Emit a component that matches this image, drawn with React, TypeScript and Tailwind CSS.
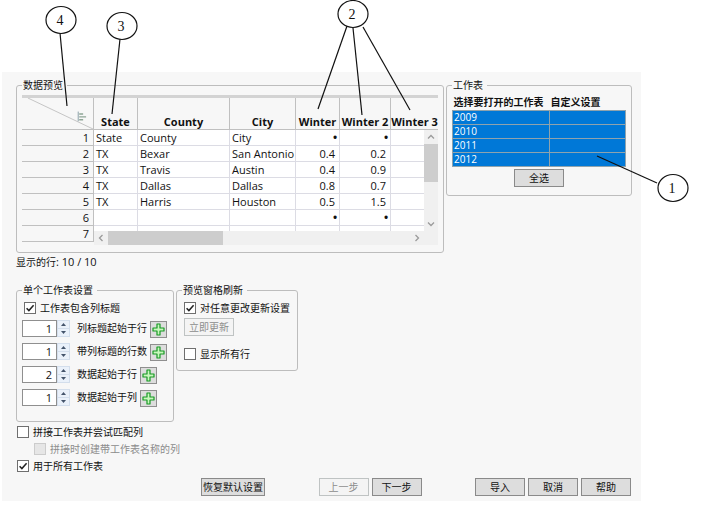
import { ReactNode, useState } from 'react';
import clsx from 'clsx';

const columns = [
  { name: 'State', width: 'w-[44px]' },
  { name: 'County', width: 'w-[92px]' },
  { name: 'City', width: 'w-[66px]' },
  { name: 'Winter', width: 'w-[44px]', numeric: true },
  { name: 'Winter 2', width: 'w-[51px]', numeric: true },
  { name: 'Winter 3', width: '', numeric: true },
];

const rows = [
  ['State', 'County', 'City', '•', '•', ''],
  ['TX', 'Bexar', 'San Antonio', '0.4', '0.2', ''],
  ['TX', 'Travis', 'Austin', '0.4', '0.9', ''],
  ['TX', 'Dallas', 'Dallas', '0.8', '0.7', ''],
  ['TX', 'Harris', 'Houston', '0.5', '1.5', ''],
  ['', '', '', '•', '•', ''],
  ['', '', '', '', '', ''],
];

const sheets = ['2009', '2010', '2011', '2012'];

const callouts = [
  { label: '4', cx: 61, cy: 20, lines: [[60, 33, 67, 106]] },
  { label: '3', cx: 122, cy: 26, lines: [[120, 39, 112, 114]] },
  { label: '2', cx: 353, cy: 14, lines: [[347, 26, 318, 109], [353, 28, 362, 115], [363, 27, 410, 110]] },
  { label: '1', cx: 673, cy: 188, lines: [[657, 183, 597, 156]] },
];

const Group = ({ title, className, children }: { title: string; className?: string; children: ReactNode }) => (
  <fieldset className={clsx('min-w-0 rounded-[3px] border border-[#bdbdbd]', className)}>
    <legend className="h-[14px] pr-1 pl-px leading-[14px]">{title}</legend>
    {children}
  </fieldset>
);

const CheckBox = ({ id, label, checked = false, disabled = false }: {
  id: string;
  label: string;
  checked?: boolean;
  disabled?: boolean;
}) => {
  const [on, setOn] = useState(checked);
  return (
    <div className="flex h-4 items-center gap-1">
      <span className="relative flex">
        <input
          id={id}
          type="checkbox"
          checked={on}
          disabled={disabled}
          onChange={(e) => setOn(e.target.checked)}
          className="h-3 w-3 appearance-none border border-[#6f6f6f] bg-white disabled:border-[#cccccc] disabled:bg-[#e6e6e6]"
        />
        {on && (
          <svg viewBox="0 0 12 12" className="pointer-events-none absolute inset-0 h-3 w-3">
            <path d="M2.6 6.2 4.9 8.6 9.6 3.2" fill="none" stroke="#222" strokeWidth="1.5" />
          </svg>
        )}
      </span>
      <label htmlFor={id} className={clsx('whitespace-nowrap', disabled && 'text-[#8c8c8c]')}>{label}</label>
    </div>
  );
};

const Button = ({ children, disabled, className = 'w-[50px]' }: {
  children: ReactNode;
  disabled?: boolean;
  className?: string;
}) => (
  <button
    type="button"
    disabled={disabled}
    className={clsx(
      'flex h-[18px] items-center justify-center border border-[#8a8a8a] bg-[#dddddd] whitespace-nowrap disabled:border-[#bfc3c3] disabled:bg-[#f4f4f4] disabled:text-[#8c8c8c]',
      className,
    )}
  >
    {children}
  </button>
);

const NumberRow = ({ id, label, initial }: { id: string; label: string; initial: number }) => {
  const [value, setValue] = useState(initial);
  return (
    <div className="flex h-[18px] items-start">
      <input
        id={id}
        type="text"
        value={value}
        onChange={(e) => setValue(Number(e.target.value) || 0)}
        className="h-[17px] w-[35px] border border-[#8f8f8f] bg-white pr-1 text-right text-[11px]"
      />
      <div className="flex h-[17px] w-[13px] flex-col border border-[#d3deec] bg-[#eaf1fa]">
        <button
          type="button"
          aria-label="增加"
          onClick={() => setValue(value + 1)}
          className="flex flex-1 items-center justify-center border-b border-[#d3deec]"
        >
          <svg viewBox="0 0 5 3" className="h-[3px] w-[5px]"><path d="M0 3 2.5 0 5 3z" fill="#44546b" /></svg>
        </button>
        <button
          type="button"
          aria-label="减少"
          onClick={() => setValue(value - 1)}
          className="flex flex-1 items-center justify-center"
        >
          <svg viewBox="0 0 5 3" className="h-[3px] w-[5px]"><path d="M0 0 2.5 3 5 0z" fill="#44546b" /></svg>
        </button>
      </div>
      <label htmlFor={id} className="ml-[7px] leading-4 whitespace-nowrap">{label}</label>
      <button
        type="button"
        aria-label="添加"
        className="ml-[3px] flex h-[17px] w-[17px] items-center justify-center self-end border border-[#8f8f8f] bg-[#dddddd]"
      >
        <svg viewBox="0 0 13 13" className="h-[13px] w-[13px]">
          <path
            d="M5 1h3v4h4v3H8v4H5V8H1V5h4z"
            fill="#c9f7bd"
            stroke="#179a24"
            strokeWidth="1.2"
            strokeLinejoin="round"
          />
        </svg>
      </button>
    </div>
  );
};

const Chevron = ({ d }: { d: string }) => (
  <svg viewBox="0 0 8 8" className="h-2 w-2">
    <path d={d} fill="none" stroke="#9b9b9b" strokeWidth="1.3" />
  </svg>
);

const PreviewTable = () => (
  <div className="relative mt-[3px] h-[150px] overflow-hidden border-t-[3px] border-[#d3d3d3]">
    <table className="w-full table-fixed border-separate border-spacing-0 text-[11px]">
      <thead>
        <tr className="h-8">
          <th className="relative w-[72px] border-r border-b border-[#c0c0c0] p-0">
            <svg viewBox="0 0 72 32" className="block h-[31px] w-full" preserveAspectRatio="none">
              <path d="M6 0 72 32" stroke="#c4c4c4" fill="none" />
              <path d="M57 14v10" stroke="#8aa0a8" />
              <path d="M58 16.5h4M58 19.5h7M58 22.5h4" stroke="#8fa697" strokeWidth="1.5" />
            </svg>
          </th>
          {columns.map((c) => (
            <th
              key={c.name}
              className={clsx('border-r border-b border-[#c0c0c0] p-0 pb-px align-bottom leading-[13px] font-bold whitespace-nowrap last:border-r-0', c.width)}
            >
              {c.name}
            </th>
          ))}
        </tr>
      </thead>
      <tbody>
        {rows.map((row, r) => (
          <tr key={r} className="h-4">
            <th className="border-r border-b border-[#c0c0c0] p-0 pr-1 text-right leading-[15px] font-normal">{r + 1}</th>
            {row.map((cell, c) => (
              <td
                key={c}
                className={clsx(
                  'h-4 border-r border-b border-[#dcdce4] bg-white p-0 leading-[15px] whitespace-nowrap last:border-r-0',
                  columns[c].numeric ? 'text-right' : 'pl-[2px]',
                  cell === '•' ? 'pr-px text-[15px]' : 'pr-1',
                )}
              >
                {cell}
              </td>
            ))}
          </tr>
        ))}
      </tbody>
    </table>
    <div className="absolute top-8 right-0 bottom-[14px] flex w-[14px] flex-col items-center bg-[#f0f0f0]">
      <span className="flex h-[14px] items-center"><Chevron d="M1 5.5 4 2.5 7 5.5" /></span>
      <span className="h-[38px] w-full bg-[#cdcdcd]" />
      <span className="mt-auto flex h-[14px] items-center"><Chevron d="M1 2.5 4 5.5 7 2.5" /></span>
    </div>
    <div className="absolute right-0 bottom-0 left-[72px] flex h-[14px] items-center bg-[#f0f0f0]">
      <span className="flex w-[14px] justify-center"><Chevron d="M5.5 1 2.5 4 5.5 7" /></span>
      <span className="h-full w-[115px] bg-[#cdcdcd]" />
      <span className="mr-[14px] ml-auto flex w-[14px] justify-center"><Chevron d="M2.5 1 5.5 4 2.5 7" /></span>
    </div>
  </div>
);

const Callouts = () => (
  <svg width="710" height="506" className="pointer-events-none absolute top-0 left-0">
    {callouts.map((c) => (
      <g key={c.label} stroke="#111" strokeWidth="1.2">
        {c.lines.map(([x1, y1, x2, y2]) => (
          <line key={x2} x1={x1} y1={y1} x2={x2} y2={y2} />
        ))}
        <ellipse cx={c.cx} cy={c.cy} rx="15" ry="13.5" fill="white" />
        <text
          x={c.cx - 1}
          y={c.cy + 5}
          textAnchor="middle"
          stroke="none"
          fill="#111"
          className="font-['Liberation_Serif',serif] text-[14px]"
        >
          {c.label}
        </text>
      </g>
    ))}
  </svg>
);

export default function App() {
  return (
    <div className="relative min-h-screen bg-white pt-[72px] pr-[69px] pl-[2px] font-['Open_Sans','Noto_Sans_CJK_SC',sans-serif] text-[10px] leading-[14px] text-[#111]">
      <main className="bg-[#f7f7f7] pt-[6px] pr-[9px] pb-[5px] pl-[14px]">
        <div className="flex items-start gap-[2px]">
          <Group title="数据预览" className="flex-1 px-[5px] pb-[7px]">
            <PreviewTable />
          </Group>
          <Group title="工作表" className="w-[186px] px-[5px] pb-[8px]">
            <table className="mt-[2px] w-full table-fixed border-collapse text-left">
              <thead>
                <tr className="h-4">
                  <th className="w-[97px] p-0 pl-px font-bold whitespace-nowrap">选择要打开的工作表</th>
                  <th className="p-0 pl-px font-bold whitespace-nowrap">自定义设置</th>
                </tr>
              </thead>
              <tbody className="bg-[#0078d7] text-white">
                {sheets.map((s) => (
                  <tr key={s} className="h-[14px]">
                    <td className="border border-[#8fa3ad] p-0 pl-px leading-[13px]">{s}</td>
                    <td className="border border-[#8fa3ad] p-0" />
                  </tr>
                ))}
              </tbody>
            </table>
            <Button className="mx-auto mt-[2px] w-[50px]">全选</Button>
          </Group>
        </div>

        <p className="h-4 leading-[18px]">
          显示的行<span className="text-[11px]">: 10 / 10</span>
        </p>

        <div className="mt-[14px] flex items-start gap-[2px]">
          <Group title="单个工作表设置" className="w-[158px] px-[5px] pb-[14px]">
            <div className="mt-[3px] pl-[2px]">
              <CheckBox id="has-headers" label="工作表包含列标题" checked />
            </div>
            <div className="mt-1 flex flex-col gap-[5px]">
              <NumberRow id="header-row" label="列标题起始于行" initial={1} />
              <NumberRow id="header-count" label="带列标题的行数" initial={1} />
              <NumberRow id="data-row" label="数据起始于行" initial={2} />
              <NumberRow id="data-col" label="数据起始于列" initial={1} />
            </div>
          </Group>
          <Group title="预览窗格刷新" className="w-[122px] px-[5px] pb-2">
            <div className="mt-[3px] flex flex-col pl-[2px]">
              <CheckBox id="auto-update" label="对任意更改更新设置" checked />
              <Button disabled className="mt-[2px] mb-[10px] w-[50px]">立即更新</Button>
              <CheckBox id="show-all" label="显示所有行" />
            </div>
          </Group>
        </div>

        <div className="mt-[2px] flex flex-col gap-px pl-px">
          <CheckBox id="concat" label="拼接工作表并尝试匹配列" />
          <div className="pl-[17px]">
            <CheckBox id="concat-name" label="拼接时创建带工作表名称的列" disabled />
          </div>
          <CheckBox id="all-sheets" label="用于所有工作表" checked />
        </div>

        <div className="mt-1 mr-px ml-[185px] flex justify-between">
          <Button className="w-[64px]">恢复默认设置</Button>
          <div className="flex gap-[3px]">
            <Button disabled>上一步</Button>
            <Button>下一步</Button>
          </div>
          <div className="flex gap-[3px]">
            <Button>导入</Button>
            <Button>取消</Button>
            <Button>帮助</Button>
          </div>
        </div>
      </main>
      <Callouts />
    </div>
  );
}
